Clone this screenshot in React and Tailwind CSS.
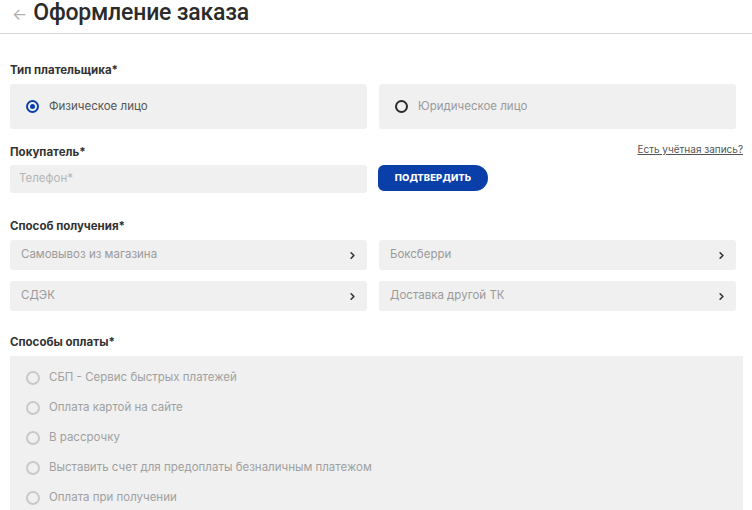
import { ChevronRight } from "lucide-react"

const payments = [
    "СБП - Сервис быстрых платежей",
    "Оплата картой на сайте",
    "В рассрочку",
    "Выставить счет для предоплаты безналичным платежом",
    "Оплата при получении",
]

function Option({ label }) {
    return (
        <div className="flex items-center justify-between h-[30px] bg-[#f0f0f0] rounded-[3px] pl-[11px] pr-[9px]">
            <span className="text-[11.5px] text-[#9a9a9a]">{label}</span>
            <ChevronRight size={11} strokeWidth={3.5} className="text-[#333]" />
        </div>
    )
}

export default function App() {
    return (
        <div className="w-[752px] h-[510px] overflow-hidden bg-white font-['Inter',sans-serif] text-[#333]">

            <div className="flex items-center h-[34px] pl-[12px] border-b border-[#d4d4d4]">
                <span className="text-[16px] text-[#b0b0b0] leading-none mb-[6px]">←</span>
                <h1 className="ml-[6px] font-['Roboto',sans-serif] text-[23px] font-medium tracking-[-0.2px] text-[#2b2b2b] leading-none mb-[8px]">
                    Оформление заказа
                </h1>
            </div>

            <div className="pl-[10px] pr-[9px]">

                <div className="mt-[28px] text-[11.5px] leading-[16px] font-bold">Тип плательщика*</div>
                <div className="grid grid-cols-[357px_357px] gap-[12px] mt-[6px]">
                    <div className="flex items-center h-[45px] bg-[#f0f0f0] rounded-[3px] pl-[16px]">
                        <span className="w-[13px] h-[13px] rounded-full border-[2.5px] border-[#0a3ea8] flex items-center justify-center">
                            <span className="w-[5px] h-[5px] rounded-full bg-[#0a3ea8]"></span>
                        </span>
                        <span className="ml-[10px] text-[11.5px] text-[#555]">Физическое лицо</span>
                    </div>
                    <div className="flex items-center h-[45px] bg-[#f0f0f0] rounded-[3px] pl-[16px]">
                        <span className="w-[13px] h-[13px] rounded-full border-[2.5px] border-[#2b2b2b]"></span>
                        <span className="ml-[10px] text-[11.5px] text-[#9a9a9a]">Юридическое лицо</span>
                    </div>
                </div>

                <div className="flex items-end justify-between mt-[15px] h-[16px]">
                    <span className="text-[11.5px] leading-[16px] font-bold">Покупатель*</span>
                    <a className="text-[10px] leading-[14px] text-[#555] underline mb-[4px]">Есть учётная запись?</a>
                </div>
                <div className="flex gap-[11px] mt-[5px]">
                    <div className="w-[357px] h-[28px] bg-[#f0f0f0] rounded-[3px] flex items-center pl-[9px]">
                        <span className="text-[11.5px] text-[#b5b5b5]">Телефон*</span>
                    </div>
                    <button className="w-[110px] h-[26px] bg-[#0a3ea8] text-white text-[9.5px] font-extrabold tracking-[0.1px] rounded-l-[6px] rounded-r-[13px]">
                        ПОДТВЕРДИТЬ
                    </button>
                </div>

                <div className="mt-[25px] text-[11.5px] leading-[16px] font-bold">Способ получения*</div>
                <div className="grid grid-cols-[357px_357px] gap-x-[12px] gap-y-[11px] mt-[6px]">
                    <Option label="Самовывоз из магазина" />
                    <Option label="Боксберри" />
                    <Option label="СДЭК" />
                    <Option label="Доставка другой ТК" />
                </div>

                <div className="mt-[23px] text-[11.5px] leading-[16px] font-bold">Способы оплаты*</div>
                <div className="mt-[6px] w-[733px] h-[160px] bg-[#f0f0f0] pl-[16px] pt-[13px] flex flex-col gap-[12px]">
                    {payments.map((p) => (
                        <div key={p} className="flex items-center h-[18px]">
                            <span className="w-[14px] h-[14px] rounded-full border-[2px] border-[#c9c9c9]"></span>
                            <span className="ml-[9px] text-[11.5px] text-[#a0a0a0]">{p}</span>
                        </div>
                    ))}
                </div>

            </div>
        </div>
    )
}
